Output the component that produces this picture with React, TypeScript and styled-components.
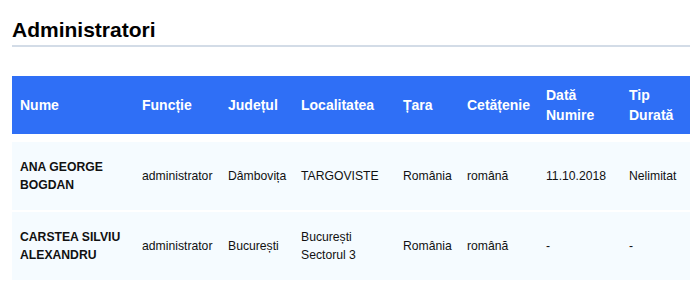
import styled, { createGlobalStyle } from "styled-components";

const GlobalStyle = createGlobalStyle`
  body {
    margin: 0;
    background: #fff;
    font-family: "Liberation Sans", Arial, sans-serif;
    color: #111;
  }
`;

type Admin = {
  name: string;
  role: string;
  county: string;
  city: string;
  country: string;
  citizenship: string;
  appointed: string;
  term: string;
};

const admins: Admin[] = [
  {
    name: "ANA GEORGE BOGDAN",
    role: "administrator",
    county: "Dâmbovița",
    city: "TARGOVISTE",
    country: "România",
    citizenship: "română",
    appointed: "11.10.2018",
    term: "Nelimitat",
  },
  {
    name: "CARSTEA SILVIU ALEXANDRU",
    role: "administrator",
    county: "București",
    city: "București Sectorul 3",
    country: "România",
    citizenship: "română",
    appointed: "-",
    term: "-",
  },
];

const columns = [
  { label: "Nume", width: 122 },
  { label: "Funcție", width: 86 },
  { label: "Județul", width: 73 },
  { label: "Localitatea", width: 102 },
  { label: "Țara", width: 64 },
  { label: "Cetățenie", width: 79 },
  { label: "Dată Numire", width: 83 },
  { label: "Tip Durată", width: 69 },
];

const App = () => {
  return (
    <>
      <GlobalStyle />
      <Section>
        <Title>Administratori</Title>
        <Table>
          <colgroup>
            {columns.map((c) => (
              <col key={c.label} style={{ width: c.width }} />
            ))}
          </colgroup>
          <thead>
            <tr>
              {columns.map((c) => (
                <HeadCell key={c.label}>{c.label}</HeadCell>
              ))}
            </tr>
          </thead>
          <tbody>
            {admins.map((a) => (
              <Row key={a.name}>
                <Cell $bold>{a.name}</Cell>
                <Cell>{a.role}</Cell>
                <Cell>{a.county}</Cell>
                <Cell>{a.city}</Cell>
                <Cell>{a.country}</Cell>
                <Cell>{a.citizenship}</Cell>
                <Cell>{a.appointed}</Cell>
                <Cell>{a.term}</Cell>
              </Row>
            ))}
          </tbody>
        </Table>
      </Section>
    </>
  );
};

const Section = styled.section`
  padding: 17px 10px 0 12px;
`;

const Title = styled.h2`
  margin: 0 0 29px;
  padding-bottom: 2px;
  font-size: 21px;
  line-height: 26px;
  font-weight: 700;
  color: #000;
  border-bottom: 2px solid #d3dce7;
`;

const Table = styled.table`
  width: 678px;
  table-layout: fixed;
  border-collapse: separate;
  border-spacing: 0;
`;

const HeadCell = styled.th`
  background: #2f6ff6;
  color: #fff;
  font-size: 14px;
  line-height: 20px;
  font-weight: 700;
  text-align: left;
  padding: 9px 8px;
  height: 40px;
`;

const Cell = styled.td<{ $bold?: boolean }>`
  background: #f5fbff;
  background-clip: padding-box;
  border-top: 2px solid transparent;
  font-size: 12.2px;
  line-height: 18px;
  font-weight: ${(p) => (p.$bold ? 700 : 400)};
  color: #111;
  padding: 16px 8px;
  height: 36px;
  vertical-align: middle;
`;

const Row = styled.tr`
  &:first-child ${Cell} {
    border-top-width: 8px;
  }
`;

export default App;
